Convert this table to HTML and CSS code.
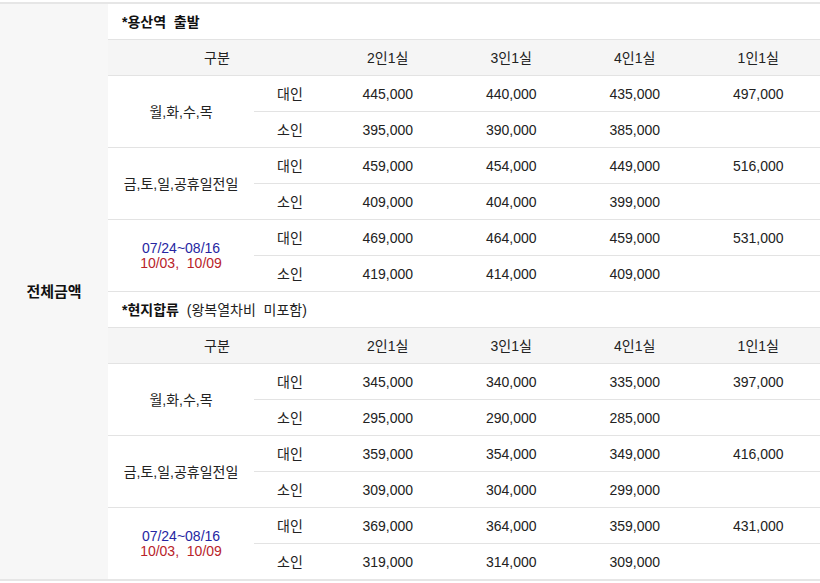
FILE: index.html
```html
<!DOCTYPE html>
<html lang="ko">
<head>
<meta charset="utf-8">
<title>전체금액</title>
<link rel="stylesheet" href="styles.css">
</head>
<body>
<div class="wrap">
<table class="price">
  <colgroup>
    <col class="c-label"><col class="c-group"><col class="c-sub">
    <col class="c-p"><col class="c-p"><col class="c-p"><col class="c-p">
  </colgroup>
  <tbody>
    <tr>
      <th class="label" rowspan="16">전체금액</th>
      <td class="title" colspan="6"><b>*용산역&nbsp; 출발</b></td>
    </tr>
    <tr class="head">
      <td colspan="2">구분</td><td>2인1실</td><td>3인1실</td><td>4인1실</td><td>1인1실</td>
    </tr>
    <tr>
      <td class="group" rowspan="2">월,화,수,목</td><td>대인</td><td>445,000</td><td>440,000</td><td>435,000</td><td>497,000</td>
    </tr>
    <tr>
      <td>소인</td><td>395,000</td><td>390,000</td><td>385,000</td><td></td>
    </tr>
    <tr>
      <td class="group" rowspan="2">금,토,일,공휴일전일</td><td>대인</td><td>459,000</td><td>454,000</td><td>449,000</td><td>516,000</td>
    </tr>
    <tr>
      <td>소인</td><td>409,000</td><td>404,000</td><td>399,000</td><td></td>
    </tr>
    <tr>
      <td class="group dates" rowspan="2"><span class="blue">07/24~08/16</span><span class="red">10/03,&nbsp; 10/09</span></td><td>대인</td><td>469,000</td><td>464,000</td><td>459,000</td><td>531,000</td>
    </tr>
    <tr>
      <td>소인</td><td>419,000</td><td>414,000</td><td>409,000</td><td></td>
    </tr>
    <tr>
      <td class="title" colspan="6"><b>*현지합류</b>&nbsp; (왕복열차비&nbsp; 미포함)</td>
    </tr>
    <tr class="head">
      <td colspan="2">구분</td><td>2인1실</td><td>3인1실</td><td>4인1실</td><td>1인1실</td>
    </tr>
    <tr>
      <td class="group" rowspan="2">월,화,수,목</td><td>대인</td><td>345,000</td><td>340,000</td><td>335,000</td><td>397,000</td>
    </tr>
    <tr>
      <td>소인</td><td>295,000</td><td>290,000</td><td>285,000</td><td></td>
    </tr>
    <tr>
      <td class="group" rowspan="2">금,토,일,공휴일전일</td><td>대인</td><td>359,000</td><td>354,000</td><td>349,000</td><td>416,000</td>
    </tr>
    <tr>
      <td>소인</td><td>309,000</td><td>304,000</td><td>299,000</td><td></td>
    </tr>
    <tr>
      <td class="group dates" rowspan="2"><span class="blue">07/24~08/16</span><span class="red">10/03,&nbsp; 10/09</span></td><td>대인</td><td>369,000</td><td>364,000</td><td>359,000</td><td>431,000</td>
    </tr>
    <tr>
      <td>소인</td><td>319,000</td><td>314,000</td><td>309,000</td><td></td>
    </tr>
  </tbody>
</table>
</div>
</body>
</html>
```

FILE: styles.css
```css
html, body {
  margin: 0;
  padding: 0;
  background: #ffffff;
}

body {
  font-family: "Liberation Sans", "Noto Sans CJK KR", sans-serif;
  font-size: 14px;
  color: #222222;
}

.wrap {
  padding-top: 2px;
  width: 820px;
}

.price {
  width: 820px;
  border-collapse: collapse;
  table-layout: fixed;
  border-top: 2px solid #e6e6e6;
  border-bottom: 2px solid #e6e6e6;
}

.c-label { width: 108px; }
.c-group { width: 146px; }
.c-sub { width: 72px; }
.c-p { width: 123.5px; }

.price td,
.price th {
  height: 35px;
  padding: 0;
  text-align: center;
  vertical-align: middle;
  border-top: 1px solid #e3e3e3;
  line-height: 16px;
}

.price th.label {
  background: #f7f7f7;
  font-size: 15px;
  font-weight: 700;
  color: #111111;
  border-top: none;
}

.price td.title {
  text-align: left;
  padding-left: 14px;
  color: #222222;
}

.price td.title b {
  font-weight: 700;
  color: #111111;
}

.price tr.head td {
  background: #f5f5f5;
  border-bottom: 1px solid #e3e3e3;
}

.price td.dates span {
  display: block;
  line-height: 15px;
}

.blue { color: #2626a2; }
.red { color: #b8232a; }
```
